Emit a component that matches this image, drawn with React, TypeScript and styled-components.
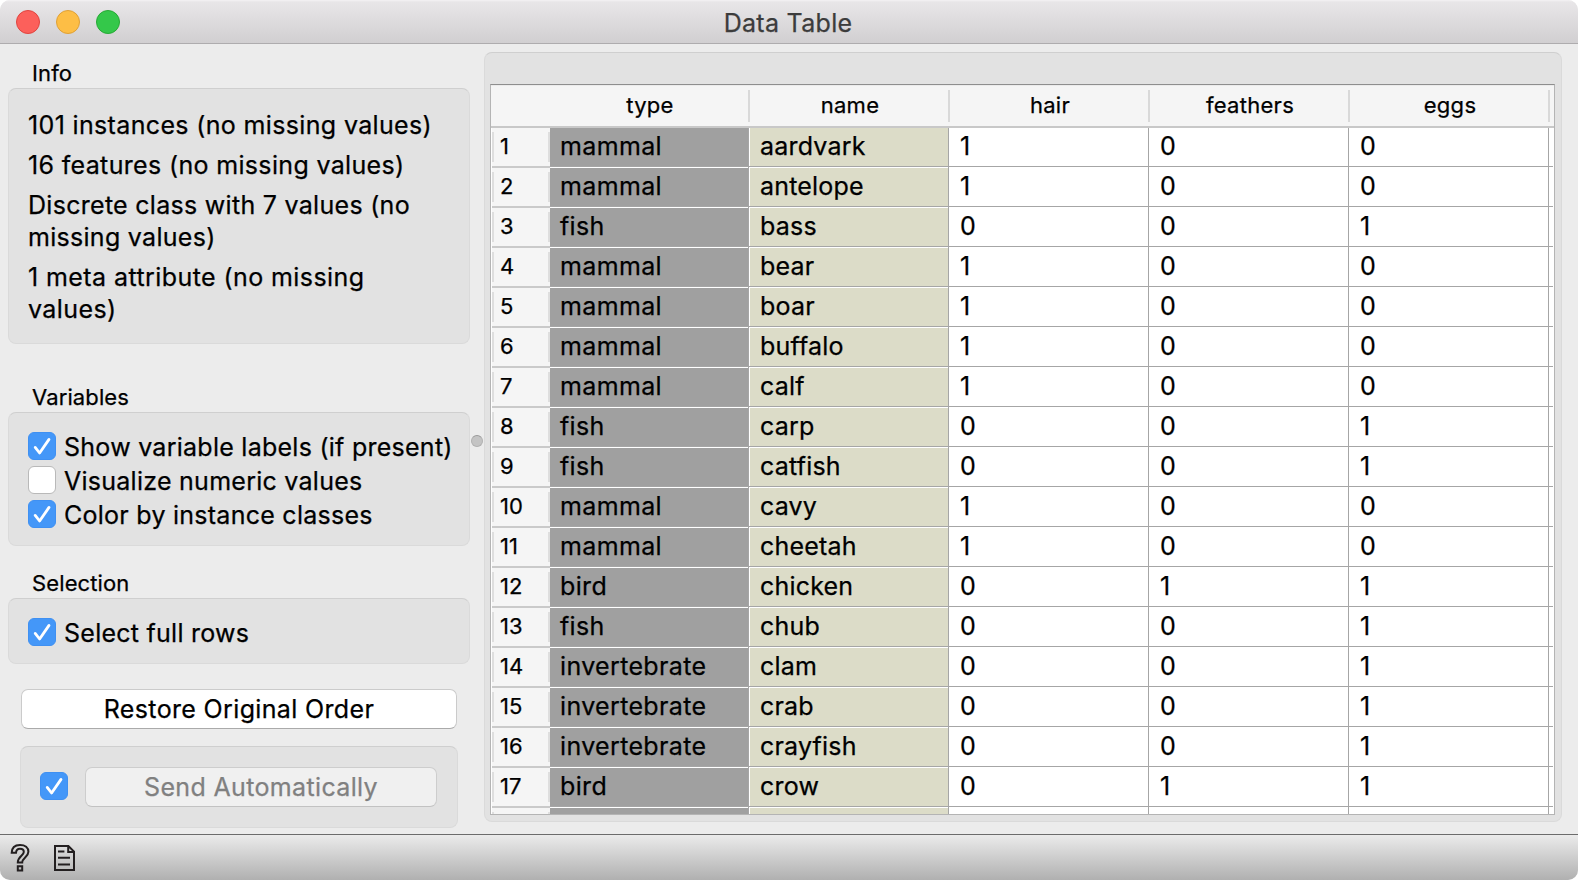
import React from 'react';
import styled, { createGlobalStyle, css } from 'styled-components';

const Global = createGlobalStyle`
  * { box-sizing: border-box; }
  html, body { margin: 0; padding: 0; background: #fff; }
  body {
    font-family: Inter, "Liberation Sans", sans-serif;
    color: #000;
    overflow: hidden;
    -webkit-text-stroke: 0.25px currentColor;
  }
`;

const Window = styled.div`
  width: 1578px;
  height: 880px;
  display: flex;
  flex-direction: column;
  background: #ececec;
  border-radius: 10px;
  overflow: hidden;
  white-space: nowrap;
`;

const TitleBar = styled.header`
  flex: none;
  height: 44px;
  display: grid;
  grid-template-columns: 120px 1fr 122px;
  align-items: center;
  background: linear-gradient(#f4f2f4 0, #e8e6e8 2px, #d1cfd1 100%);
  border-bottom: 1px solid #aeacae;
`;

const Lights = styled.div`
  display: flex;
  gap: 16px;
  padding-left: 16px;
`;

const Light = styled.span<{ $fill: string; $edge: string }>`
  flex: none;
  width: 24px;
  height: 24px;
  border-radius: 50%;
  background: ${(p) => p.$fill};
  border: 1px solid ${(p) => p.$edge};
`;

const Title = styled.h1`
  margin: 0;
  padding-top: 2px;
  text-align: center;
  font-size: 25px;
  font-weight: 400;
  letter-spacing: 0.3px;
  color: #3c3c3c;
`;

const Body = styled.div`
  flex: none;
  height: 790px;
  display: flex;
`;

const Sidebar = styled.aside`
  width: 470px;
  padding: 14px 0 0 8px;
  display: flex;
  flex-direction: column;
`;

const GroupLabel = styled.h2<{ $gap?: number }>`
  margin: ${(p) => p.$gap ?? 0}px 0 0;
  padding-left: 24px;
  height: 30px;
  font-size: 22px;
  font-weight: 400;
  line-height: 30px;
  letter-spacing: 0.12px;
`;

const panel = css`
  background: #e2e2e2;
  border: 1px solid #dadada;
  border-top-color: #cfcfcf;
  border-radius: 8px;
`;

const Group = styled.section<{ $h: number }>`
  ${panel}
  height: ${(p) => p.$h}px;
  padding: 19px 0 0 19px;
`;

const InfoText = styled.div`
  padding-top: 1px;
`;

const InfoLine = styled.p<{ $track: number }>`
  margin: 0 0 8px;
  font-size: 25px;
  line-height: 32px;
  letter-spacing: ${(p) => p.$track}px;
`;

const Check = styled.label`
  display: flex;
  align-items: center;
  gap: 8px;
  height: 28px;
  margin-bottom: 6px;
  font-size: 25px;
  line-height: 26px;
  letter-spacing: 0.26px;
`;

const CheckText = styled.span`
  padding-top: 2px;
`;

const Box = styled.span<{ $on: boolean }>`
  flex: none;
  width: 28px;
  height: 28px;
  border-radius: 6px;
  display: flex;
  align-items: center;
  justify-content: center;
  background: ${(p) => (p.$on ? '#4497f8' : '#fff')};
  border: 1px solid ${(p) => (p.$on ? '#3f90f2' : '#b9b9b9')};
`;

const PushButton = styled.button<{ $disabled?: boolean }>`
  height: 40px;
  padding: 0;
  font: 400 25px/36px Inter, "Liberation Sans", sans-serif;
  letter-spacing: 0.35px;
  color: ${(p) => (p.$disabled ? '#808080' : '#000')};
  -webkit-text-stroke: 0.25px currentColor;
  background: ${(p) => (p.$disabled ? '#f0f0f0' : '#fff')};
  border: 1px solid ${(p) => (p.$disabled ? '#cdcdcd' : '#cbcbcb')};
  border-bottom-color: ${(p) => (p.$disabled ? '#c2c2c2' : '#aaa')};
  border-radius: 7px;
`;

const RestoreButton = styled(PushButton)`
  margin: 25px 13px 0;
`;

const SendBox = styled.div`
  ${panel}
  margin: 17px 12px 0;
  height: 82px;
  padding: 0 20px 0 19px;
  display: flex;
  align-items: center;
  gap: 17px;

  ${Box} {
    margin-bottom: 2px;
  }
`;

const SendButton = styled(PushButton)`
  flex: 1;
`;

const Splitter = styled.div`
  width: 14px;
  padding-left: 1px;
  display: flex;
  align-items: center;
`;

const Knob = styled.span`
  width: 12px;
  height: 12px;
  border-radius: 50%;
  margin-top: 4px;
  background: #c4c4c4;
  border: 1px solid #b2b2b2;
  border-top-color: #999;
`;

const Main = styled.main`
  ${panel}
  width: 1078px;
  height: 770px;
  margin-top: 8px;
  padding: 31px 0 0 5px;
`;

const Table = styled.div`
  width: 1065px;
  height: 731px;
  border: 1px solid #b4b4b4;
  border-top-color: #8e8e8e;
  background: #fff;
  overflow: hidden;
`;

const HeadRow = styled.div`
  height: 43px;
  display: flex;
  align-items: center;
  padding-left: 59px;
  background: #f5f5f5;
  border-top: 1px solid #ebebeb;
  border-bottom: 2px solid #c8c8c8;
`;

const HeadCell = styled.div`
  width: 200px;
  height: 32px;
  padding-left: 2px;
  border-right: 2px solid #d9d9d9;
  text-align: center;
  font-size: 22px;
  line-height: 30px;
  letter-spacing: 0.3px;
`;

const Row = styled.div`
  height: 40px;
  display: flex;
  padding-left: 1px;
`;

const RowHead = styled.div`
  width: 58px;
  background: #f5f5f5;
  border-bottom: 2px solid #cacaca;
  padding: 4px 0;
`;

const RowNumber = styled.div`
  height: 30px;
  border: solid #dedede;
  border-width: 0 2px;
  padding-left: 6px;
  font-size: 22px;
  line-height: 28px;
`;

const tints = { type: '#a0a0a0', name: '#dcdcc8', plain: '#fff' };

/* Each cell ends in a grey rule followed by a white one, right and bottom. */
const Cell = styled.div<{ $tint: keyof typeof tints }>`
  width: 200px;
  height: 40px;
  padding-left: 10px;
  font-size: 25px;
  line-height: 37px;
  letter-spacing: ${(p) => (p.$tint === 'type' ? 0.35 : 0.2)}px;
  background:
    linear-gradient(#a6a6a6, #a6a6a6) 198px 0 / 1px 100% no-repeat,
    linear-gradient(#a6a6a6, #a6a6a6) 0 38px / 100% 1px no-repeat,
    linear-gradient(#fff, #fff) 199px 0 / 1px 100% no-repeat,
    linear-gradient(#fff, #fff) 0 39px / 100% 1px no-repeat,
    ${(p) => tints[p.$tint]};
`;

const Tail = styled.div`
  width: 3px;
  height: 39px;
  border-bottom: 1px solid #a6a6a6;
`;

const StatusBar = styled.footer`
  flex: 1;
  display: flex;
  align-items: flex-start;
  gap: 21px;
  padding: 8px 0 0 9px;
  border-top: 1px solid #6c6c6c;
  background: linear-gradient(#ebebeb, #b0b0b0);
`;

const CheckBox = ({ on }: { on: boolean }) => (
  <Box $on={on}>
    {on && (
      <svg width="26" height="26" viewBox="0 0 26 26" fill="none" stroke="#fff" strokeWidth="2.8" strokeLinecap="round" strokeLinejoin="round">
        <path d="M6.2 14.4 L10.6 20 L20 6.4" />
      </svg>
    )}
  </Box>
);

const Option = ({ on, text }: { on: boolean; text: string }) => (
  <Check>
    <CheckBox on={on} />
    <CheckText>{text}</CheckText>
  </Check>
);

const columns = ['type', 'name', 'hair', 'feathers', 'eggs'];

const rows: [string, string, number, number, number][] = [
  ['mammal', 'aardvark', 1, 0, 0],
  ['mammal', 'antelope', 1, 0, 0],
  ['fish', 'bass', 0, 0, 1],
  ['mammal', 'bear', 1, 0, 0],
  ['mammal', 'boar', 1, 0, 0],
  ['mammal', 'buffalo', 1, 0, 0],
  ['mammal', 'calf', 1, 0, 0],
  ['fish', 'carp', 0, 0, 1],
  ['fish', 'catfish', 0, 0, 1],
  ['mammal', 'cavy', 1, 0, 0],
  ['mammal', 'cheetah', 1, 0, 0],
  ['bird', 'chicken', 0, 1, 1],
  ['fish', 'chub', 0, 0, 1],
  ['invertebrate', 'clam', 0, 0, 1],
  ['invertebrate', 'crab', 0, 0, 1],
  ['invertebrate', 'crayfish', 0, 0, 1],
  ['bird', 'crow', 0, 1, 1],
];

const tintOf = (i: number) => (i === 0 ? 'type' : i === 1 ? 'name' : 'plain');

export default function App() {
  return (
    <>
      <Global />
      <Window>
        <TitleBar>
          <Lights>
            <Light $fill="#fc605b" $edge="#e0443f" />
            <Light $fill="#fdbe45" $edge="#dfa036" />
            <Light $fill="#34c84a" $edge="#27a935" />
          </Lights>
          <Title>Data Table</Title>
        </TitleBar>
        <Body>
          <Sidebar>
            <GroupLabel>Info</GroupLabel>
            <Group $h={256}>
              <InfoText>
                <InfoLine $track={0.35}>101 instances (no missing values)</InfoLine>
                <InfoLine $track={0.34}>16 features (no missing values)</InfoLine>
                <InfoLine $track={0.29}>Discrete class with 7 values (no<br />missing values)</InfoLine>
                <InfoLine $track={0.42}>1 meta attribute (no missing<br />values)</InfoLine>
              </InfoText>
            </Group>
            <GroupLabel $gap={38}>Variables</GroupLabel>
            <Group $h={134}>
              <Option on text="Show variable labels (if present)" />
              <Option on={false} text="Visualize numeric values" />
              <Option on text="Color by instance classes" />
            </Group>
            <GroupLabel $gap={22}>Selection</GroupLabel>
            <Group $h={66}>
              <Option on text="Select full rows" />
            </Group>
            <RestoreButton>Restore Original Order</RestoreButton>
            <SendBox>
              <CheckBox on />
              <SendButton $disabled>Send Automatically</SendButton>
            </SendBox>
          </Sidebar>
          <Splitter><Knob /></Splitter>
          <Main>
            <Table>
              <HeadRow>
                {columns.map((c) => <HeadCell key={c}>{c}</HeadCell>)}
              </HeadRow>
              {rows.map((r, n) => (
                <Row key={n}>
                  <RowHead><RowNumber>{n + 1}</RowNumber></RowHead>
                  {r.map((v, i) => <Cell key={i} $tint={tintOf(i)}>{v}</Cell>)}
                  <Tail />
                </Row>
              ))}
              <Row>
                <RowHead><RowNumber /></RowHead>
                {columns.map((c, i) => <Cell key={c} $tint={tintOf(i)} />)}
              </Row>
            </Table>
          </Main>
        </Body>
        <StatusBar>
          <svg width="24" height="32" viewBox="0 0 24 32" fill="none" stroke="#231f20" strokeWidth="2">
            <path d="M2.7 9.8 C2.8 4.6 6.2 1.9 11 1.9 C16.2 1.9 19.4 4.6 19.4 8.8 C19.4 14 13.2 15 13.2 19.6 H8.8 C8.8 13.4 14.8 12.6 14.8 9 C14.8 6.8 13.2 5.8 11 5.8 C8.6 5.8 7.2 7.2 7 9.8 Z" />
            <path d="M8.8 23.2 H13.2 V27.6 H8.8 Z" />
          </svg>
          <svg width="24" height="32" viewBox="0 0 24 32" fill="none" stroke="#231f20" strokeWidth="2">
            <path d="M1 3 H14.4 L20 8.6 V27 H1 Z M14.2 3 V9 H20 M4 8.4 H10.4 M4 14.8 H16 M4 21.5 H16" />
          </svg>
        </StatusBar>
      </Window>
    </>
  );
}
